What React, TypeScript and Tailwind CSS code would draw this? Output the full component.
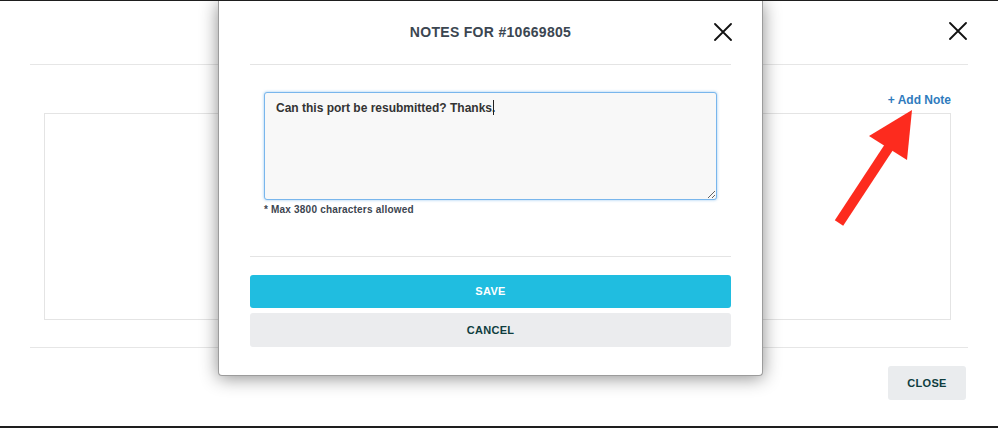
import React from "react";

const font = { fontFamily: '"Liberation Sans", Arial, sans-serif' };

function XIcon({ size = 18 }: { size?: number }) {
  return (
    <svg width={size} height={size} viewBox="0 0 18 18" fill="none">
      <path d="M1 1 L17 17 M17 1 L1 17" stroke="#111" strokeWidth="1.8" strokeLinecap="round" />
    </svg>
  );
}

export default function App() {
  return (
    <div
      className="relative w-[998px] h-[428px] bg-white overflow-hidden box-border border-t border-b-2 border-[#1e1e1e]"
      style={font}
    >
      {/* Background page */}
      <div className="flex flex-col px-[30px] h-full">
        <div className="h-[64px] flex items-start justify-end pt-[21px] pr-[1px] border-b border-[#e6e6e6]">
          <XIcon />
        </div>
        <div className="flex flex-col ml-[14px] mr-[17px]">
          <div className="h-[48px] flex items-end justify-end pb-[7px]">
            <span className="text-[12px] font-bold text-[#2f7bbd] leading-none">+ Add Note</span>
          </div>
          <div className="h-[207px] border border-[#e4e4e4]"></div>
        </div>
        <div className="h-[28px] border-b border-[#e6e6e6]"></div>
        <div className="flex justify-end pt-[18px] pr-[2px]">
          <button className="w-[78px] h-[34px] rounded-[3px] bg-[#eaecee] text-[11px] font-bold tracking-[0.3px] text-[#0f3d3e]">
            CLOSE
          </button>
        </div>
      </div>

      {/* Red arrow annotation */}
      <svg className="absolute left-[820px] top-[95px]" width="110" height="140" viewBox="820 95 110 140">
        <line x1="839" y1="222" x2="889" y2="146" stroke="#fd2b1e" strokeWidth="10" />
        <polygon points="912,109 869,135 907,159" fill="#fd2b1e" />
      </svg>

      {/* Modal */}
      <div className="absolute left-[218px] top-0 w-[545px] h-[375px] bg-white border border-t-0 border-[#9c9c9c] rounded-b-[4px] shadow-[0_2px_18px_rgba(0,0,0,0.45)] px-[31px] flex flex-col">
        <div className="h-[64px] flex items-center border-b border-[#e4e4e4] relative">
          <div className="flex-1 text-center text-[14px] font-bold tracking-[0.3px] text-[#3b4651]">
            NOTES FOR #10669805
          </div>
          <div className="absolute right-[-1px] top-[22px]">
            <XIcon />
          </div>
        </div>
        <div className="px-[14px] pt-[27px]">
          <div className="relative">
            <textarea
              readOnly
              defaultValue="Can this port be resubmitted? Thanks."
              className="block w-full h-[108px] rounded-[3px] bg-[#f8f8f8] border border-[#79b6ec] shadow-[0_0_3px_rgba(80,160,230,0.6)] px-[11px] pt-[6px] text-[12px] font-bold text-[#333] outline-none"
              style={font}
            />
            <div className="absolute left-[229px] top-[8px] w-[1px] h-[15px] bg-[#222]"></div>
          </div>
          <div className="mt-[4px] text-[10px] font-bold tracking-[0.2px] text-[#3c4550] leading-[12px]">
            * Max 3800 characters allowed
          </div>
        </div>
        <div className="mt-[40px] border-b border-[#e4e4e4]"></div>
        <div className="pt-[18px] flex flex-col gap-[5px]">
          <button className="h-[33px] rounded-[3px] bg-[#20bde0] text-white text-[11px] font-bold tracking-[0.3px]">
            SAVE
          </button>
          <button className="h-[34px] rounded-[3px] bg-[#ebecee] text-[#0f3d3e] text-[11px] font-bold tracking-[0.3px]">
            CANCEL
          </button>
        </div>
      </div>
    </div>
  );
}
